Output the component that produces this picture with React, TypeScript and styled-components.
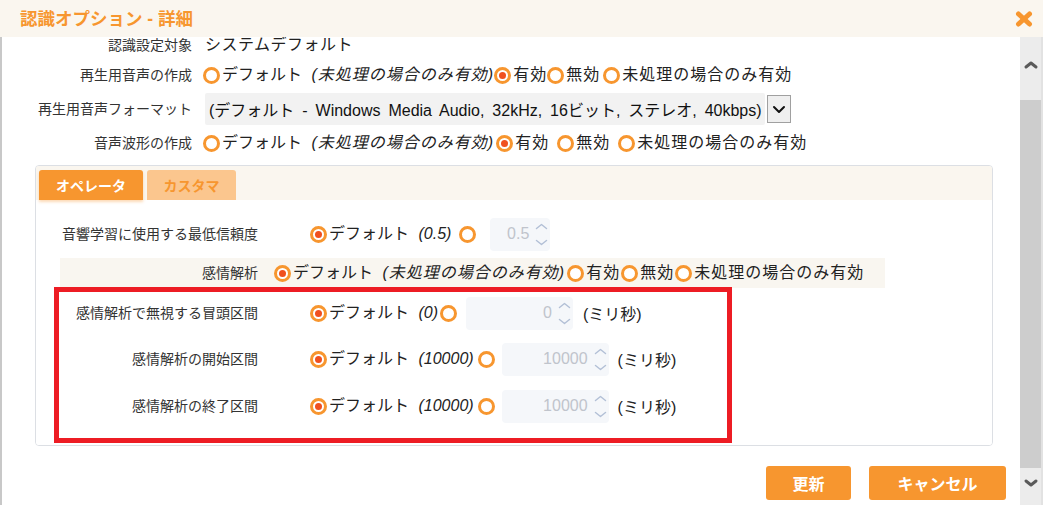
import React from "react";
import styled, { createGlobalStyle } from "styled-components";

const ORANGE = "#f7962f";
const FONT = `"Liberation Sans", "Noto Sans CJK JP", sans-serif`;

const Global = createGlobalStyle`
  html, body { margin: 0; padding: 0; background: #fff; }
  body { font-family: ${FONT}; color: #222; }
  * { box-sizing: border-box; }
`;

const Dialog = styled.div`
  width: 1043px;
  height: 505px;
  display: flex;
  flex-direction: column;
  overflow: hidden;
  background: #fff;
`;

const Header = styled.div`
  height: 37px;
  flex: none;
  background: #faf6ef;
  display: flex;
  align-items: center;
  justify-content: space-between;
  padding: 0 10px 0 20px;
`;

const Title = styled.h1`
  margin: 0;
  font-size: 17.5px;
  font-weight: bold;
  line-height: 20px;
  color: ${ORANGE};
`;

const CloseButton = styled.button`
  width: 18px;
  height: 16px;
  padding: 0;
  border: none;
  background: transparent;
  display: flex;
  margin-top: 1px;
`;

const Body = styled.div`
  flex: 1;
  display: flex;
  min-height: 0;
`;

const Content = styled.div`
  flex: 1;
  min-width: 0;
  border-left: 2px solid #c8c8c8;
  display: flex;
  flex-direction: column;
  overflow: hidden;
`;

const Scrollbar = styled.div`
  width: 23px;
  flex: none;
  background: #ececec;
  border-right: 2px solid #e2e2e2;
  display: flex;
  flex-direction: column;
`;

const ScrollArrow = styled.div<{ $h: number }>`
  height: ${(p) => p.$h}px;
  flex: none;
  display: flex;
  align-items: center;
  justify-content: center;
`;

const ScrollThumb = styled.div`
  height: 368px;
  flex: none;
  background: #cdcdcd;
`;

const TopForm = styled.div`
  display: flex;
  flex-direction: column;
`;

const FieldRow = styled.div<{ $h: number; $pl?: number; $mt?: number }>`
  display: flex;
  align-items: center;
  height: ${(p) => p.$h}px;
  margin-top: ${(p) => p.$mt ?? 0}px;
  padding-left: ${(p) => p.$pl ?? 0}px;
  flex: none;
`;

const FieldLabel = styled.div<{ $w: number; $gap: number }>`
  width: ${(p) => p.$w}px;
  margin-right: ${(p) => p.$gap}px;
  flex: none;
  text-align: right;
  font-size: 14px;
  line-height: 16px;
  color: #333;
  white-space: nowrap;
`;

const ValueText = styled.span`
  font-size: 16px;
  line-height: 16px;
  letter-spacing: 0.5px;
  margin-left: 2px;
  color: #222;
`;

const OptionGroup = styled.div`
  display: flex;
  align-items: center;
`;

const Option = styled.label<{ $mr?: number }>`
  display: flex;
  align-items: center;
  margin-right: ${(p) => p.$mr ?? 0}px;
  white-space: nowrap;
`;

const RadioMark = styled.span<{ $checked?: boolean }>`
  width: 17px;
  height: 17px;
  flex: none;
  border-radius: 50%;
  border: 3px solid ${ORANGE};
  background: #fff;
  display: inline-flex;
  align-items: center;
  justify-content: center;
  &::after {
    content: "";
    width: 7px;
    height: 7px;
    border-radius: 50%;
    background: #f0501f;
    display: ${(p) => (p.$checked ? "block" : "none")};
  }
`;

const OptionText = styled.span<{ $ls?: number }>`
  font-size: 16px;
  line-height: 20px;
  letter-spacing: ${(p) => p.$ls ?? 0}px;
  margin-left: 2px;
  color: #222;
`;

const Em = styled.em<{ $ls?: number }>`
  font-style: italic;
  margin-left: 5px;
  letter-spacing: ${(p) => p.$ls ?? 0}px;
`;

const SelectBox = styled.div`
  display: flex;
  align-items: center;
  margin-left: 2px;
`;

const SelectValue = styled.div`
  width: 560px;
  height: 32px;
  background: #f2f2f2;
  border-radius: 2px;
  padding-left: 4px;
  display: flex;
  align-items: center;
  font-size: 16px;
  word-spacing: 3.5px;
  color: #111;
  white-space: nowrap;
`;

const SelectArrow = styled.div`
  width: 24px;
  height: 28px;
  margin-left: 2px;
  border: 1px solid #a0a0a0;
  background: #efefef;
  display: flex;
  align-items: center;
  justify-content: center;
`;

const Panel = styled.section`
  margin: 6px 27px 0 33px;
  border: 1px solid #dcdfe4;
  border-radius: 4px;
  overflow: hidden;
  flex: none;
`;

const TabBar = styled.div`
  height: 34px;
  background: #faf6ef;
  display: flex;
  align-items: flex-end;
  gap: 4px;
  padding-left: 3px;
`;

const Tab = styled.div<{ $active?: boolean; $w: number }>`
  width: ${(p) => p.$w}px;
  height: 30px;
  border-radius: 3px 3px 0 0;
  background: ${(p) => (p.$active ? ORANGE : "#fbc68e")};
  color: ${(p) => (p.$active ? "#fff" : ORANGE)};
  box-shadow: ${(p) => (p.$active ? "0 2px 3px rgba(247,150,47,0.35)" : "none")};
  font-size: 14px;
  font-weight: bold;
  display: flex;
  align-items: center;
  justify-content: center;
  position: relative;
  z-index: 1;
`;

const PanelBody = styled.div`
  padding: 17px 0 2px 0;
  display: flex;
  flex-direction: column;
  background: #fff;
`;

const Band = styled.div`
  margin: 7px 0 0 24px;
  width: 825px;
  height: 30px;
  background: #f9f6f0;
  display: flex;
  align-items: center;
  flex: none;
`;

const Highlight = styled.div`
  margin: -1px 0 0 18px;
  width: 678px;
  border: 5px solid #ed1c24;
  padding-bottom: 10px;
  display: flex;
  flex-direction: column;
`;

const Spinner = styled.div<{ $w: number; $ml: number }>`
  width: ${(p) => p.$w}px;
  height: 33px;
  margin-left: ${(p) => p.$ml}px;
  flex: none;
  background: #f5f7fa;
  border-radius: 4px;
  display: flex;
  align-items: center;
  justify-content: flex-end;
  padding-right: 1px;
`;

const SpinValue = styled.span`
  font-size: 16px;
  color: #c0c4cc;
  margin-right: 5px;
`;

const SpinArrows = styled.span`
  width: 15px;
  display: flex;
  flex-direction: column;
  align-items: center;
  gap: 9px;
`;

const Unit = styled.span<{ $ml: number }>`
  margin-left: ${(p) => p.$ml}px;
  font-size: 16px;
  color: #222;
  white-space: nowrap;
`;

const Footer = styled.div`
  display: flex;
  justify-content: flex-end;
  gap: 18px;
  margin: 20px 14px 0 0;
  flex: none;
`;

const ActionButton = styled.button<{ $w: number }>`
  width: ${(p) => p.$w}px;
  height: 34px;
  border: none;
  border-radius: 3px;
  background: ${ORANGE};
  color: #fff;
  font-family: ${FONT};
  font-size: 16px;
  font-weight: bold;
  padding: 0;
`;

const Chevron = ({ dir, color, w, h, sw }: { dir: "up" | "down"; color: string; w: number; h: number; sw: number }) => (
  <svg width={w} height={h} viewBox={`0 0 ${w} ${h}`}>
    <polyline
      points={
        dir === "up"
          ? `${sw},${h - sw} ${w / 2},${sw} ${w - sw},${h - sw}`
          : `${sw},${sw} ${w / 2},${h - sw} ${w - sw},${sw}`
      }
      fill="none"
      stroke={color}
      strokeWidth={sw}
      strokeLinecap="round"
      strokeLinejoin="round"
    />
  </svg>
);

const Radio = ({
  checked,
  children,
  mr,
  ls,
}: {
  checked?: boolean;
  children: React.ReactNode;
  mr?: number;
  ls?: number;
}) => (
  <Option $mr={mr}>
    <RadioMark $checked={checked} />
    <OptionText $ls={ls}>{children}</OptionText>
  </Option>
);

const NumberInput = ({ value, w, ml }: { value: string; w: number; ml: number }) => (
  <Spinner $w={w} $ml={ml}>
    <SpinValue>{value}</SpinValue>
    <SpinArrows>
      <Chevron dir="up" color="#b3c0d6" w={13} h={7} sw={1.5} />
      <Chevron dir="down" color="#b3c0d6" w={13} h={7} sw={1.5} />
    </SpinArrows>
  </Spinner>
);

export default function App() {
  return (
    <Dialog>
      <Global />
      <Header>
        <Title>認識オプション - 詳細</Title>
        <CloseButton aria-label="close">
          <svg width="18" height="16" viewBox="0 0 18 16">
            <line x1="3.5" y1="3" x2="14.5" y2="13" stroke={ORANGE} strokeWidth="5" strokeLinecap="round" />
            <line x1="14.5" y1="3" x2="3.5" y2="13" stroke={ORANGE} strokeWidth="5" strokeLinecap="round" />
          </svg>
        </CloseButton>
      </Header>
      <Body>
        <Content>
          <TopForm>
            <FieldRow $h={16}>
              <FieldLabel $w={190} $gap={11}>認識設定対象</FieldLabel>
              <ValueText>システムデフォルト</ValueText>
            </FieldRow>
            <FieldRow $h={32} $mt={6}>
              <FieldLabel $w={190} $gap={11}>再生用音声の作成</FieldLabel>
              <OptionGroup>
                <Radio mr={0}>
                  デフォルト <Em $ls={1}>(未処理の場合のみ有効)</Em>
                </Radio>
                <Radio checked mr={0} ls={1}>有効</Radio>
                <Radio mr={3} ls={1}>無効</Radio>
                <Radio ls={1}>未処理の場合のみ有効</Radio>
              </OptionGroup>
            </FieldRow>
            <FieldRow $h={32} $mt={2}>
              <FieldLabel $w={190} $gap={11}>再生用音声フォーマット</FieldLabel>
              <SelectBox>
                <SelectValue>(デフォルト - Windows Media Audio, 32kHz, 16ビット, ステレオ, 40kbps)</SelectValue>
                <SelectArrow>
                  <Chevron dir="down" color="#111" w={14} h={9} sw={2} />
                </SelectArrow>
              </SelectBox>
            </FieldRow>
            <FieldRow $h={32} $mt={2}>
              <FieldLabel $w={190} $gap={11}>音声波形の作成</FieldLabel>
              <OptionGroup>
                <Radio mr={2}>
                  デフォルト <Em $ls={1}>(未処理の場合のみ有効)</Em>
                </Radio>
                <Radio checked mr={8} ls={1}>有効</Radio>
                <Radio mr={8} ls={1}>無効</Radio>
                <Radio ls={1}>未処理の場合のみ有効</Radio>
              </OptionGroup>
            </FieldRow>
          </TopForm>

          <Panel>
            <TabBar>
              <Tab $active $w={104}>オペレータ</Tab>
              <Tab $w={89}>カスタマ</Tab>
            </TabBar>
            <PanelBody>
              <FieldRow $h={34} $pl={24}>
                <FieldLabel $w={198} $gap={52}>音響学習に使用する最低信頼度</FieldLabel>
                <OptionGroup>
                  <Radio checked mr={8}>
                    デフォルト <Em>(0.5)</Em>
                  </Radio>
                  <RadioMark />
                  <NumberInput value="0.5" w={60} ml={14} />
                </OptionGroup>
              </FieldRow>
              <Band>
                <FieldLabel $w={198} $gap={16}>感情解析</FieldLabel>
                <OptionGroup>
                  <Radio checked mr={2}>
                    デフォルト <Em $ls={1}>(未処理の場合のみ有効)</Em>
                  </Radio>
                  <Radio mr={1} ls={1}>有効</Radio>
                  <Radio mr={1} ls={1}>無効</Radio>
                  <Radio ls={1}>未処理の場合のみ有効</Radio>
                </OptionGroup>
              </Band>
              <Highlight>
                <FieldRow $h={42}>
                  <FieldLabel $w={199} $gap={52}>感情解析で無視する冒頭区間</FieldLabel>
                  <OptionGroup>
                    <Radio checked mr={2}>
                      デフォルト <Em>(0)</Em>
                    </Radio>
                    <RadioMark />
                    <NumberInput value="0" w={107} ml={9} />
                    <Unit $ml={10}>(ミリ秒)</Unit>
                  </OptionGroup>
                </FieldRow>
                <FieldRow $h={50}>
                  <FieldLabel $w={199} $gap={52}>感情解析の開始区間</FieldLabel>
                  <OptionGroup>
                    <Radio checked mr={4}>
                      デフォルト <Em>(10000)</Em>
                    </Radio>
                    <RadioMark />
                    <NumberInput value="10000" w={107} ml={7} />
                    <Unit $ml={9}>(ミリ秒)</Unit>
                  </OptionGroup>
                </FieldRow>
                <FieldRow $h={44}>
                  <FieldLabel $w={199} $gap={52}>感情解析の終了区間</FieldLabel>
                  <OptionGroup>
                    <Radio checked mr={4}>
                      デフォルト <Em>(10000)</Em>
                    </Radio>
                    <RadioMark />
                    <NumberInput value="10000" w={107} ml={7} />
                    <Unit $ml={9}>(ミリ秒)</Unit>
                  </OptionGroup>
                </FieldRow>
              </Highlight>
            </PanelBody>
          </Panel>

          <Footer>
            <ActionButton $w={85}>更新</ActionButton>
            <ActionButton $w={137}>キャンセル</ActionButton>
          </Footer>
        </Content>
        <Scrollbar>
          <ScrollArrow $h={56}>
            <Chevron dir="up" color="#5a5a5a" w={16} h={10} sw={3} />
          </ScrollArrow>
          <ScrollArrow $h={7} />
          <ScrollThumb />
          <ScrollArrow $h={30}>
            <Chevron dir="down" color="#5a5a5a" w={16} h={10} sw={3} />
          </ScrollArrow>
        </Scrollbar>
      </Body>
    </Dialog>
  );
}
